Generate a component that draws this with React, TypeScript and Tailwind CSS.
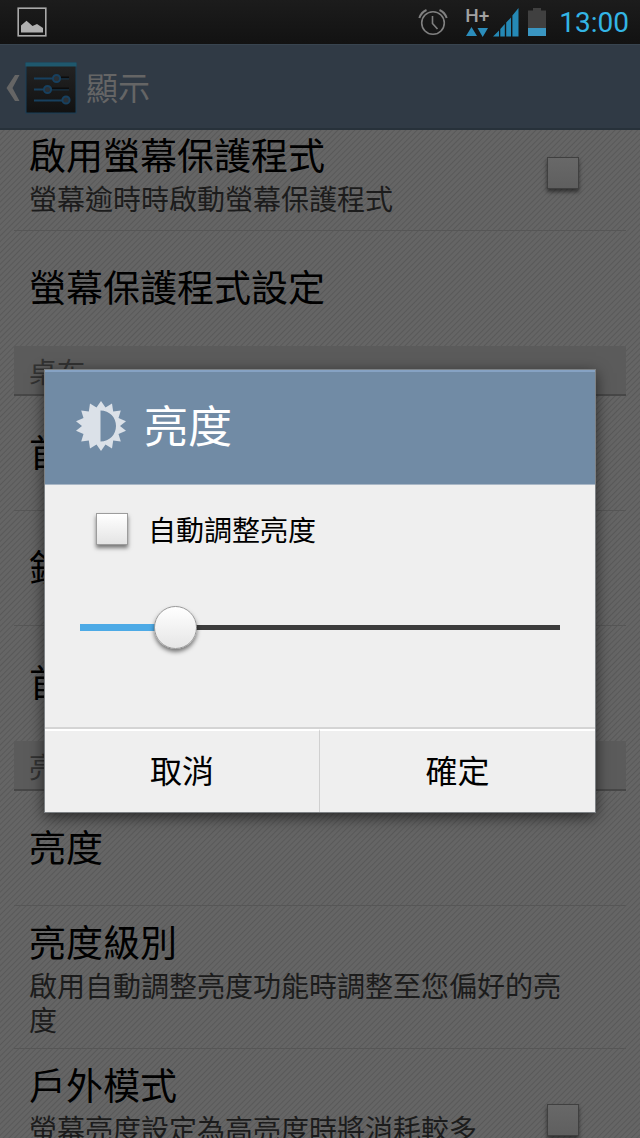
import { useState } from "react";

type Row = { title: string; summary?: string; checkbox?: boolean; tall?: boolean };

const groups: { heading?: string; rows: Row[] }[] = [
  {
    rows: [
      { title: "啟用螢幕保護程式", summary: "螢幕逾時時啟動螢幕保護程式", checkbox: true },
      { title: "螢幕保護程式設定" },
    ],
  },
  {
    heading: "桌布",
    rows: [{ title: "首" }, { title: "鎖" }, { title: "首" }],
  },
  {
    heading: "亮",
    rows: [
      { title: "亮度" },
      { title: "亮度級別", summary: "啟用自動調整亮度功能時調整至您偏好的亮度" },
      { title: "戶外模式", summary: "螢幕亮度設定為高亮度時將消耗較多", checkbox: true, tall: true },
    ],
  },
];

function StatusBar() {
  return (
    <div className="flex h-11 items-center bg-linear-to-b from-[#1c1c1c] to-[#121212] pl-[17px] pr-[11px]">
      <svg viewBox="0 0 30 30" className="h-[30px] w-[30px]">
        <rect x="1.2" y="1.2" width="27.6" height="27.6" fill="none" stroke="#a9a9a9" strokeWidth="1.6" />
        <path d="M4 25.500V18.500L9.500 13.800L15.500 19L20 17L26 21V25.500Z" fill="#b0b0b0" />
      </svg>
      <svg viewBox="0 0 30 28" className="ml-auto h-7 w-[30px]" fill="none" stroke="#808080" strokeWidth="1.6">
        <circle cx="15" cy="15" r="11.300" />
        <path d="M14.500 8V15.500L19.500 21" />
        <path d="M1.300 10C2.500 6.500 5 3.500 8.500 2M28.700 10C27.500 6.500 25 3.500 21.500 2" strokeWidth="2" />
      </svg>
      <div className="ml-[17px] flex flex-col items-center">
        <span className="pb-[3px] font-[Roboto] text-[19px] font-medium leading-[17px] text-[#a2a2a2]">H+</span>
        <svg viewBox="0 0 22 10" className="h-[10px] w-[22px]" fill="#2b8dbb">
          <path d="M5.500 0L11 9H0ZM11.500 1H22L16.700 10Z" />
        </svg>
      </div>
      <svg viewBox="0 0 26 29" className="ml-[4px] h-[29px] w-[26px]" fill="#2589b6">
        <path d="M0 28.500L6 22.500V28.500ZM7.300 21L11.800 16V28.500H7.300ZM13.200 14.500L18 9.500V28.500H13.200ZM19.400 7.500L25.500 0V28.500H19.400Z" />
      </svg>
      <svg viewBox="0 0 18 28" className="ml-[9px] h-7 w-[18px]">
        <path d="M0 2.500H5V0H13V2.500H18V28H0Z" fill="#404040" />
        <path d="M0 20H18V28H0Z" fill="#3a96c2" />
      </svg>
      <span className="ml-[13px] pt-[2px] font-[Roboto] text-[28px] leading-none text-[#33b5e5]">13:00</span>
    </div>
  );
}

function ActionBar() {
  return (
    <header className="flex h-[86px] items-center border-b-2 border-t border-b-[#27313a] border-t-[#38444f] bg-[#303a45] pl-[6px] pt-[2px]">
      <button aria-label="返回" className="flex items-center">
        <svg viewBox="0 0 14 26" className="h-[26px] w-[14px]" fill="#656565">
          <path d="M9 0H13.500L6.500 13L13.500 26H9L0.500 13Z" />
        </svg>
        <svg viewBox="0 0 52 52" className="ml-[5px] h-[52px] w-[52px]">
          <defs>
            <linearGradient id="tile" x1="0" y1="0" x2="0" y2="1">
              <stop offset="0" stopColor="#242424" />
              <stop offset="1" stopColor="#111111" />
            </linearGradient>
          </defs>
          <rect x="1" y="1" width="50" height="50" fill="url(#tile)" stroke="#193e58" />
          <path d="M0.500 0.500H51.500V4.500H0.500Z" fill="#1f586d" />
          <path d="M36 15.500H44M27 26.500H44" stroke="#0c0c0c" strokeWidth="1.800" />
          <g stroke="#17405f" strokeWidth="1.800" fill="#2a3036">
            <path d="M9 16.500H27M9 27.500H18M9 38.500H37" />
            <path d="M35 16.900H44M26 27.900H44" strokeWidth="0.800" />
            <circle cx="31.500" cy="16.500" r="3.600" strokeWidth="2" />
            <circle cx="22.500" cy="27.500" r="3.600" strokeWidth="2" />
            <circle cx="41" cy="38" r="3.600" strokeWidth="2" />
          </g>
        </svg>
      </button>
      <h1 className="ml-[9px] pb-1 text-[32px] leading-10 text-[#656565]">顯示</h1>
    </header>
  );
}

function SettingRow({ row }: { row: Row }) {
  return (
    <li className="border-b border-[#565656] last:border-transparent">
      <label className="flex min-h-[114px] items-center py-3 pl-[15px] pr-[47px]">
        <span className={row.tall ? "block min-h-[118px] flex-1" : "block flex-1"}>
          <span className="block pb-1 text-[37px] leading-[46px] text-black">{row.title}</span>
          {row.summary && <span className="block text-[28px] leading-[34px] text-[#1c1c1c]">{row.summary}</span>}
        </span>
        {row.checkbox && (
          <input
            type="checkbox"
            className="h-8 w-8 shrink-0 appearance-none border border-[#404040] bg-linear-to-b from-[#686868] to-[#5f5f5f] shadow-[0_3px_4px_rgba(0,0,0,0.5)]"
          />
        )}
      </label>
    </li>
  );
}

function BrightnessDialog() {
  const [auto, setAuto] = useState(false);
  const [level, setLevel] = useState(17);

  return (
    <div className="absolute inset-x-0 bottom-0 top-11 flex items-center px-[44px]">
      <div
        role="dialog"
        aria-labelledby="dialog-title"
        className="w-full border border-[#7d8184] bg-[#efefef] shadow-[0_4px_14px_rgba(0,0,0,0.6)]"
      >
        <div className="flex h-[115px] items-center border-b border-t-2 border-b-[#a9b7c6] border-t-[#86a2c3] bg-[#718ba5] pb-1 pl-[31px]">
          <svg viewBox="-25 -25 50 50" className="h-[50px] w-[50px]" fill="#dbe1e8">
            <path
              fillRule="evenodd"
              d="M0 -25L4.500 -18.400L11 -22.500L12.200 -14.600L19.800 -15.500L17.500 -8L25 -4.800L19 0L25 4.800L17.500 8L19.800 15.500L12.200 14.600L11 22.500L4.500 18.400L0 25L-4.500 18.400L-11 22.500L-12.200 14.600L-19.800 15.500L-17.500 8L-25 4.800L-19 0L-25 -4.800L-17.500 -8L-19.800 -15.500L-12.200 -14.600L-11 -22.500L-4.500 -18.400ZM-0.500 -15.500V15.500C8.500 15.500 15 8.500 15 0C15 -8.500 8.500 -15.500 -0.500 -15.500Z"
            />
          </svg>
          <h2 id="dialog-title" className="ml-[18px] pb-1 text-[44px] leading-[56px] text-white">
            亮度
          </h2>
        </div>

        <div className="px-[35px] pb-[77px] pt-[23px]">
          <label className="flex items-center gap-5 pl-4 text-[28px] leading-[42px] text-black">
            <input
              type="checkbox"
              checked={auto}
              onChange={(e) => setAuto(e.target.checked)}
              className="h-8 w-8 appearance-none border border-[#9c9c9c] bg-linear-to-b from-white to-[#e4e4e4] shadow-[0_3px_4px_rgba(0,0,0,0.5)] checked:bg-[#4daae6]"
            />
            自動調整亮度
          </label>
          <div className="relative mt-[54px] flex h-[46px] items-center">
            <div className="flex h-[7px] w-full items-center">
              <div className="h-[7px] bg-[#4daae6]" style={{ width: `${level + 2}%` }} />
              <div className="h-[5px] flex-1 bg-[#3c3c3c]" />
            </div>
            <input
              type="range"
              aria-label="亮度"
              min={0}
              max={100}
              value={level}
              onChange={(e) => setLevel(Number(e.target.value))}
              className="absolute inset-0 w-full appearance-none bg-transparent [&::-webkit-slider-thumb]:h-[43px] [&::-webkit-slider-thumb]:w-[43px] [&::-webkit-slider-thumb]:appearance-none [&::-webkit-slider-thumb]:rounded-full [&::-webkit-slider-thumb]:border [&::-webkit-slider-thumb]:border-[#9a9a9a] [&::-webkit-slider-thumb]:bg-linear-to-b [&::-webkit-slider-thumb]:from-white [&::-webkit-slider-thumb]:to-[#e6e6e6] [&::-webkit-slider-thumb]:shadow-[0_3px_4px_rgba(0,0,0,0.5)]"
            />
          </div>
        </div>

        <div className="grid h-[85px] grid-cols-2 divide-x divide-[#d0d0d0] border-t-2 border-[#d4d4d4] text-[32px] text-black">
          <button className="border-t-2 border-t-white pb-[5px]">取消</button>
          <button className="border-t-2 border-t-white pb-[5px]">確定</button>
        </div>
      </div>
    </div>
  );
}

export default function App() {
  return (
    <div
      lang="zh-Hant"
      className="relative flex h-screen flex-col overflow-hidden bg-[#636363] font-['Noto_Sans_CJK_TC',sans-serif]"
    >
      <StatusBar />
      <ActionBar />
      <main className="min-h-0 flex-1 overflow-hidden bg-[repeating-linear-gradient(135deg,#656565_0px,#656565_2px,#595959_3px,#656565_4px)] px-[14px]">
        <div className="-mt-[14px]">
          {groups.map((group, i) => (
            <section key={i}>
              {group.heading && (
                <h2 className="h-[50px] border-b-2 border-[#474747] bg-[#5b5b5b] pl-[15px] text-[28px] leading-[50px] text-[#323232]">
                  {group.heading}
                </h2>
              )}
              <ul>
                {group.rows.map((row, j) => (
                  <SettingRow key={j} row={row} />
                ))}
              </ul>
            </section>
          ))}
        </div>
      </main>
      <BrightnessDialog />
    </div>
  );
}
